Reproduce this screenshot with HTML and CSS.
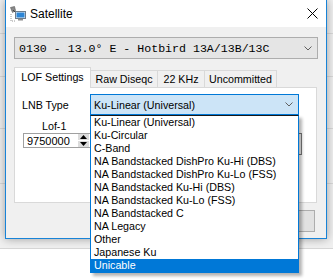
FILE: index.html
```html
<!DOCTYPE html>
<html lang="en">
<head>
  <meta charset="UTF-8" />
  <title>Satellite</title>
  <link rel="stylesheet" href="styles.css">
</head>
<body>
  <div class="desktop">
    <div class="window">
      <div class="titlebar">
        <svg class="app-icon" width="16" height="16" viewBox="0 0 16 16">
          <path d="M0.5 1.5 L4.5 0.5 L5.5 4.5 L2.5 6.5 Z" fill="#8a8a8a" stroke="#555" stroke-width="0.6"/>
          <path d="M3 4 L6 7" stroke="#444" stroke-width="1"/>
          <rect x="5.5" y="5.5" width="10" height="7" fill="#e6edf3" stroke="#6d7c8c"/>
          <rect x="6.5" y="6.5" width="8" height="5" fill="#2d86d6"/>
          <rect x="8" y="13" width="5" height="1.5" fill="#8c8c8c"/>
          <path d="M1 8 L1 15 M2 15 L6 15" stroke="#9a9a9a" stroke-width="1" stroke-dasharray="1 1"/>
        </svg>
        <span class="title">Satellite</span>
        <svg class="close" width="11" height="11" viewBox="0 0 11 11">
          <path d="M0.5 0.5 L10.5 10.5 M10.5 0.5 L0.5 10.5" stroke="#000" stroke-width="1"/>
        </svg>
      </div>

      <div class="client">
        <div class="sat-combo">
          <span>0130 - 13.0° E - Hotbird 13A/13B/13C</span>
          <svg class="chevron" width="8" height="5" viewBox="0 0 8 5"><polyline points="0.5,0.5 4,4 7.5,0.5" fill="none" stroke="#606060"/></svg>
        </div>

        <div class="tabs">
          <div class="tab active">LOF Settings</div>
          <div class="tab tab-raw">Raw Diseqc</div>
          <div class="tab tab-khz">22 KHz</div>
          <div class="tab tab-unc">Uncommitted</div>
        </div>

        <div class="panel">
          <div class="lnb-row">
            <span class="lnb-label">LNB Type</span>
            <div class="lnb-select">
              <div class="lnb-combo">
                <span>Ku-Linear (Universal)</span>
                <svg class="chevron" width="8" height="5" viewBox="0 0 8 5"><polyline points="0.5,0.5 4,4 7.5,0.5" fill="none" stroke="#606060"/></svg>
              </div>
              <ul class="lnb-list">
                <li>Ku-Linear (Universal)</li>
                <li>Ku-Circular</li>
                <li>C-Band</li>
                <li>NA Bandstacked DishPro Ku-Hi (DBS)</li>
                <li>NA Bandstacked DishPro Ku-Lo (FSS)</li>
                <li>NA Bandstacked Ku-Hi (DBS)</li>
                <li>NA Bandstacked Ku-Lo (FSS)</li>
                <li>NA Bandstacked C</li>
                <li>NA Legacy</li>
                <li>Other</li>
                <li>Japanese Ku</li>
                <li class="selected">Unicable</li>
              </ul>
            </div>
          </div>

          <div class="lof-row">
            <div class="lof-field">
              <div class="lof-label">Lof-1</div>
              <div class="spin">
                <span class="spin-value">9750000</span>
                <div class="spin-buttons">
                  <div class="spin-btn"><svg width="7" height="4" viewBox="0 0 7 4"><path d="M0 4 L3.5 0 L7 4 Z" fill="#000"/></svg></div>
                  <div class="spin-btn"><svg width="7" height="4" viewBox="0 0 7 4"><path d="M0 0 L3.5 4 L7 0 Z" fill="#000"/></svg></div>
                </div>
              </div>
            </div>
            <div class="side-box"></div>
          </div>
        </div>

        <div class="buttons">
          <button class="btn"></button>
        </div>
      </div>
    </div>
  </div>
</body>
</html>
```

FILE: styles.css
```css
* {
  box-sizing: border-box;
}

body {
  margin: 0;
  width: 333px;
  height: 279px;
  overflow: hidden;
  background: #fff;
  font-family: "Liberation Sans", Arial, sans-serif;
  font-size: 10.7px;
  color: #000;
}

.desktop {
  height: 249px;
  padding-left: 5px;
  background-color: #f0f0f0;
  background-image:
    linear-gradient(#d9d9d9, #d9d9d9),
    linear-gradient(#d9d9d9, #d9d9d9),
    linear-gradient(#d9d9d9, #d9d9d9),
    linear-gradient(#d9d9d9, #d9d9d9);
  background-size: 100% 1px;
  background-repeat: no-repeat;
  background-position: 0 33px, 0 76px, 0 128px, 0 183px;
  border-bottom: 1px solid #d6d6d6;
}

.window {
  width: 322px;
  height: 239px;
  border: 1px solid #1883d7;
  border-top: 0;
  background: #f0f0f0;
  box-shadow: 0 0 9px rgba(0, 0, 0, 0.35);
  display: flex;
  flex-direction: column;
}

.titlebar {
  height: 27px;
  background: #fff;
  display: flex;
  align-items: center;
  padding: 0 8px 0 4px;
}

.app-icon {
  margin-right: 4px;
}

.title {
  flex: 1;
  font-size: 12px;
}

.client {
  flex: 1;
  padding: 10px 8px 0;
}

.sat-combo {
  height: 22px;
  border: 1px solid #adadad;
  background: #e5e5e5;
  display: flex;
  align-items: center;
  justify-content: space-between;
  padding: 0 5px 0 4px;
  font-family: "Liberation Mono", "Courier New", monospace;
  font-size: 11.6px;
}

.tabs {
  display: flex;
  align-items: flex-start;
  height: 21px;
  margin-top: 8px;
  position: relative;
  z-index: 1;
}

.tab {
  height: 17px;
  margin-top: 3px;
  margin-left: -1px;
  border: 1px solid #d9d9d9;
  border-bottom: 0;
  background: #f0f0f0;
  display: flex;
  align-items: center;
  justify-content: center;
}

.tab.active {
  height: 21px;
  margin-top: 0;
  margin-left: 0;
  width: 77px;
  background: #fff;
  padding-bottom: 2px;
}

.tab-raw {
  width: 68px;
}

.tab-khz {
  width: 48px;
}

.tab-unc {
  width: 73px;
}

.panel {
  width: 303px;
  height: 116px;
  margin-top: -1px;
  border: 1px solid #d9d9d9;
  background: #fff;
  padding: 6px 7px;
}

.lnb-row {
  display: flex;
  align-items: center;
}

.lnb-label {
  width: 68px;
}

.lnb-select {
  position: relative;
  width: 209px;
}

.lnb-combo {
  height: 21px;
  border: 1px solid #0078d7;
  background: #cce4f7;
  display: flex;
  align-items: center;
  justify-content: space-between;
  padding: 0 5px 0 3px;
}

.lnb-list {
  position: absolute;
  top: 21px;
  left: 0;
  width: 209px;
  margin: 0;
  padding: 0;
  list-style: none;
  background: #fff;
  border: 1px solid #0078d7;
  border-top-color: #1a1a1a;
  box-shadow: 3px 3px 3px rgba(0, 0, 0, 0.3);
  z-index: 5;
}

.lnb-list li {
  height: 13px;
  line-height: 13px;
  padding-left: 3px;
  white-space: nowrap;
}

.lnb-list li.selected {
  background: #0078d7;
  color: #fff;
}

.lof-row {
  display: flex;
  align-items: flex-start;
  margin-top: 5px;
}

.lof-label {
  height: 12px;
  line-height: 12px;
  padding-left: 20px;
}

.spin {
  width: 68px;
  height: 15px;
  margin: 1px 0 0 1px;
  border: 1px solid #a0a0a0;
  display: flex;
  align-items: center;
  justify-content: space-between;
  padding-left: 3px;
}

.spin-value {
  font-size: 11px;
}

.spin-buttons {
  display: flex;
  flex-direction: column;
  gap: 1px;
  margin-right: 1px;
}

.spin-btn {
  width: 11px;
  height: 6px;
  background: #dcdcdc;
  display: flex;
  align-items: center;
  justify-content: center;
}

.side-box {
  width: 100px;
  height: 22px;
  margin: 13px 7px 0 auto;
  border: 1px solid #7a7a7a;
  background: #f7f7f7;
}

.buttons {
  display: flex;
  justify-content: flex-end;
  padding: 7px 3px 0 0;
}

.btn {
  width: 75px;
  height: 22px;
  border: 1px solid #adadad;
  background: #e1e1e1;
  padding: 0;
}
```
